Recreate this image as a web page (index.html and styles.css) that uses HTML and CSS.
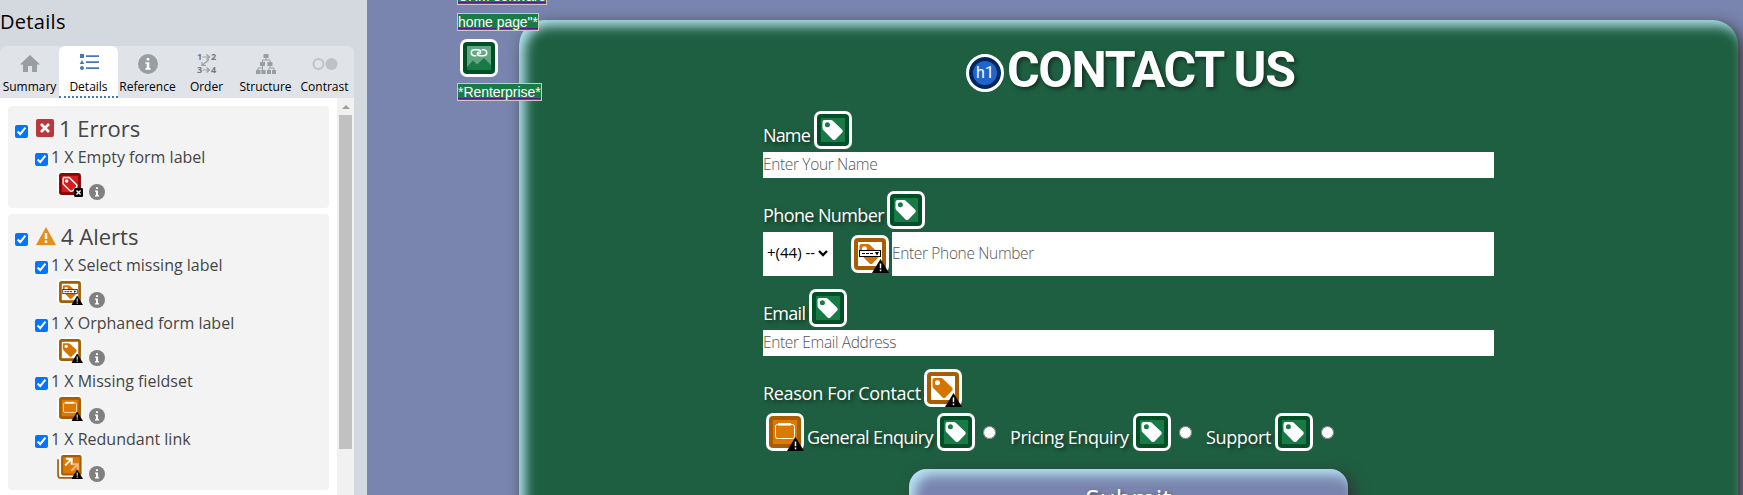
FILE: index.html
```html
<!DOCTYPE html>
<html lang="en">
<head>
<meta charset="utf-8">
<title>Contact Us</title>
<link rel="stylesheet" href="styles.css">
</head>
<body>
<svg class="defs" width="0" height="0">
  <symbol id="warn" viewBox="0 0 17 14"><path d="M8.5 0L17 14H0Z" fill="#000"/><path d="M8.5 4.5V9.3M8.5 10.5V12.3" stroke="#fff" stroke-width="1.5"/></symbol>
  <symbol id="tagshape" viewBox="0 0 38 38"><path fill-rule="evenodd" d="M10.5 9H17Q18 9 18.8 9.8L28.2 18.8Q29.5 20.2 28.2 21.5L21.5 28.4Q20 29.7 18.5 28.4L9.5 19.2Q8.5 18.3 8.5 17V11Q8.5 9 10.5 9ZM13.4 11.2A2.5 2.5 0 1 0 13.4 16.2A2.5 2.5 0 1 0 13.4 11.2Z"/></symbol>
  <symbol id="label" viewBox="0 0 38 38"><rect width="38" height="38" rx="7" fill="#fff"/><rect x="3" y="3" width="32" height="32" rx="4" fill="#004f27"/><rect x="7" y="7" width="24" height="24" fill="#187b47"/><use href="#tagshape" fill="#fff"/></symbol>
  <symbol id="orphan" viewBox="0 0 38 38"><rect width="38" height="38" rx="7" fill="#fff"/><rect x="3" y="3" width="32" height="32" rx="4" fill="#a85d00"/><rect x="7" y="7" width="24" height="24" fill="#fff"/><use href="#tagshape" fill="#d47500"/><use href="#warn" x="21" y="24" width="17" height="14"/></symbol>
  <symbol id="select" viewBox="0 0 38 38"><rect width="38" height="38" rx="7" fill="#fff"/><rect x="3" y="3" width="32" height="32" rx="4" fill="#a85d00"/><rect x="7" y="7" width="24" height="24" fill="#fff"/><use href="#tagshape" fill="#d47500"/><rect x="8.5" y="15.5" width="21" height="6" fill="#fff" stroke="#000"/><path d="M11 18.5H23" stroke="#000" stroke-width="1.2" stroke-dasharray="3 1"/><path d="M24 17H28L26 20.5Z"/><use href="#warn" x="21" y="24" width="17" height="14"/></symbol>
  <symbol id="fieldset" viewBox="0 0 38 38"><rect width="38" height="38" rx="7" fill="#fff"/><rect x="3" y="3" width="32" height="32" rx="4" fill="#a85d00"/><rect x="7" y="7" width="24" height="24" fill="#dc7a00"/><rect x="9.5" y="11.5" width="19" height="14" rx="2" fill="none" stroke="#fff"/><path d="M12 11.3H25" stroke="#fff" stroke-width="2.6"/><use href="#warn" x="21" y="24" width="17" height="14"/></symbol>
  <symbol id="redundant" viewBox="0 0 38 38"><rect x="0" y="4" width="34" height="34" rx="6" fill="#fff"/><path d="M1.5 9V32Q1.5 36.5 6 36.5H28" fill="none" stroke="#a85d00" stroke-width="2.5"/><rect x="4" y="0" width="34" height="34" rx="6" fill="#fff"/><rect x="6" y="3" width="30" height="30" rx="3" fill="#a85d00"/><rect x="9" y="6" width="24" height="24" fill="#dc7a00"/><path d="M12 18L20 10M13 8.5H21.5V17" fill="none" stroke="#fff" stroke-width="2.8"/><path d="M21 26L29 18M22 16.5H30.5V25" fill="none" stroke="#f3bd83" stroke-width="2.8"/><use href="#warn" x="21" y="24" width="17" height="14"/></symbol>
  <symbol id="emptylabel" viewBox="0 0 38 38"><rect width="38" height="38" rx="7" fill="#fff"/><rect x="3" y="3" width="32" height="32" rx="4" fill="#8c0505"/><rect x="7" y="7" width="24" height="24" fill="#d11f1f"/><path d="M10 9.5H18L29 20.5V23L22 29.5H19.5L9 19V10.5Z" fill="none" stroke="#fff" stroke-width="2"/><circle cx="14" cy="14.5" r="2.6" fill="#fff"/><rect x="25" y="25" width="13" height="13" rx="2"/><path d="M28.5 28.5L34.5 34.5M34.5 28.5L28.5 34.5" stroke="#fff" stroke-width="2"/></symbol>
  <symbol id="linkedimage" viewBox="0 0 38 38"><rect width="38" height="38" rx="7" fill="#fff"/><rect x="3" y="3" width="32" height="32" rx="4" fill="#004f27"/><rect x="7" y="7" width="24" height="24" fill="#60a680"/><path d="M7 28L13 21.5L17 25.5L24 19L31 26V31H7Z" fill="#187b47"/><path d="M16.5 16.8H14.5Q11.3 16.8 11.3 13.8T14.5 10.8H17.5Q20.5 10.8 20.5 13.2Q20.5 14.6 18.5 14.6M21.5 10.8H23.5Q26.7 10.8 26.7 13.8T23.5 16.8H20Q17.3 16.8 17.3 14.6Q17.3 13.2 19 13.2" fill="none" stroke="#fff" stroke-width="1.5"/></symbol>
  <symbol id="info" viewBox="0 0 20 20"><circle cx="10" cy="10" r="10" fill="currentColor"/><path d="M8.7 4H11.3V6.4H8.7ZM7.4 8.2H11.3V14H12.6V15.7H7.4V14H8.7V9.8H7.4Z" fill="#fff"/></symbol>
</svg>
<div class="page">
  <aside class="sidebar">
    <h2 class="title">Details</h2>
    <nav class="tabs">
      <a class="tab"><svg class="tab-icon" viewBox="0 0 20 20"><path d="M10 1L20 10.5H17V18H12V12H8V18H3V10.5H0Z" fill="#999ea1"/></svg>Summary</a>
      <a class="tab active"><svg class="tab-icon" viewBox="0 0 20 20"><path d="M1 0H5V4H1ZM3 6L5.3 10H.7ZM7 1.2H20V3H7ZM7 7.2H20V9H7ZM7 13.2H20V15H7Z" fill="#4678b8"/><circle cx="3" cy="14" r="2" fill="#4678b8"/></svg>Details</a>
      <a class="tab"><svg class="tab-icon muted"><use href="#info"/></svg>Reference</a>
      <a class="tab"><svg class="tab-icon" viewBox="0 0 20 20"><g class="order-digits"><text x="0" y="6">1</text><text x="14" y="6">2</text><text x="0" y="19">3</text><text x="14" y="19">4</text></g><path d="M5.5 3H12M9.5 .5L12.5 3L9.5 5.5M5.5 16H12M9.5 13.5L12.5 16L9.5 18.5M12 5.5L5 11.5M5 8V11.5H9" fill="none" stroke="#999ea1" stroke-width="1.2"/></svg>Order</a>
      <a class="tab"><svg class="tab-icon" viewBox="0 0 20 20"><path d="M7.5 0H12.5V4H7.5ZM4 8H9V12H4ZM11.5 8H16.5V12H11.5ZM0 16H4.5V20H0ZM5.3 16H9.7V20H5.3ZM11 16H15V20H11ZM16 16H20V20H16Z" fill="#999ea1"/><path d="M10 4V6H6.5V8M10 6H14V8M6.5 12V14H2V16M6.5 14V16M14 12V14H18V16M13 14V16" fill="none" stroke="#999ea1"/></svg>Structure</a>
      <a class="tab"><svg class="tab-icon wide" viewBox="0 0 26 20"><circle cx="6.5" cy="10" r="5" fill="none" stroke="#bfc2c5" stroke-width="2"/><circle cx="19.5" cy="10" r="6" fill="#bfc2c5"/></svg>Contrast</a>
    </nav>
    <div class="results">
      <div class="groups">
        <section class="group">
          <div class="group-head"><input class="check" type="checkbox" checked><svg class="group-icon" viewBox="0 0 18 18"><rect width="18" height="18" rx="2" fill="#b8383b"/><path d="M5 5L13 13M13 5L5 13" stroke="#fff" stroke-width="2.7"/></svg><h3 class="group-title">1 Errors</h3></div>
          <div class="item"><label class="item-head"><input class="check" type="checkbox" checked>1 X Empty form label</label><div class="item-icons"><svg class="mini"><use href="#emptylabel"/></svg><svg class="info"><use href="#info"/></svg></div></div>
        </section>
        <section class="group">
          <div class="group-head"><input class="check" type="checkbox" checked><svg class="group-icon alert" viewBox="0 0 20 18"><path d="M10 0L20 18H0Z" fill="#e68e1a"/><path d="M10 6V12M10 13.4V16" stroke="#fff" stroke-width="2.5"/></svg><h3 class="group-title">4 Alerts</h3></div>
          <div class="item"><label class="item-head"><input class="check" type="checkbox" checked>1 X Select missing label</label><div class="item-icons"><svg class="mini"><use href="#select"/></svg><svg class="info"><use href="#info"/></svg></div></div>
          <div class="item"><label class="item-head"><input class="check" type="checkbox" checked>1 X Orphaned form label</label><div class="item-icons"><svg class="mini"><use href="#orphan"/></svg><svg class="info"><use href="#info"/></svg></div></div>
          <div class="item"><label class="item-head"><input class="check" type="checkbox" checked>1 X Missing fieldset</label><div class="item-icons"><svg class="mini"><use href="#fieldset"/></svg><svg class="info"><use href="#info"/></svg></div></div>
          <div class="item"><label class="item-head"><input class="check" type="checkbox" checked>1 X Redundant link</label><div class="item-icons"><svg class="mini"><use href="#redundant"/></svg><svg class="info"><use href="#info"/></svg></div></div>
        </section>
      </div>
      <div class="scrollbar"><svg class="arrow" viewBox="0 0 8 4"><path d="M4 0L8 4H0Z" fill="#a0a0a0"/></svg><div class="thumb"></div></div>
    </div>
  </aside>
  <main class="site">
    <div class="alts">
      <span class="alt first">CRM software</span>
      <span class="alt second">home page"*</span>
      <svg class="mark image-mark"><use href="#linkedimage"/></svg>
      <span class="alt">*Renterprise*</span>
    </div>
    <div class="card">
      <div class="heading"><span class="h1-mark">h1</span><h1 class="heading-text">CONTACT US</h1></div>
      <form class="form">
        <div class="label-row"><span class="label name">Name</span><svg class="mark"><use href="#label"/></svg></div>
        <input class="field" placeholder="Enter Your Name">
        <div class="label-row"><span class="label phone">Phone Number</span><svg class="mark"><use href="#label"/></svg></div>
        <div class="phone-row">
          <div class="code">+(44) --<svg class="chevron" viewBox="0 0 10 7"><path d="M1 1L5 5L9 1" fill="none" stroke="#000" stroke-width="2.3"/></svg></div>
          <svg class="mark"><use href="#select"/></svg>
          <input class="field tall" placeholder="Enter Phone Number">
        </div>
        <div class="label-row"><span class="label email">Email</span><svg class="mark"><use href="#label"/></svg></div>
        <input class="field" placeholder="Enter Email Address">
        <div class="label-row"><span class="label reason">Reason For Contact</span><svg class="mark"><use href="#orphan"/></svg></div>
        <div class="options">
          <svg class="mark"><use href="#fieldset"/></svg>
          <span class="label general">General Enquiry</span><svg class="mark"><use href="#label"/></svg><input class="radio" type="radio">
          <span class="label pricing">Pricing Enquiry</span><svg class="mark"><use href="#label"/></svg><input class="radio" type="radio">
          <span class="label support">Support</span><svg class="mark"><use href="#label"/></svg><input class="radio" type="radio">
        </div>
        <button class="submit" type="button">Submit</button>
      </form>
    </div>
  </main>
</div>
</body>
</html>
```
FILE: styles.css
```css
* { box-sizing: border-box; }
body { margin: 0; overflow: hidden; font-family: "Open Sans", sans-serif; }
svg { display: block; flex: none; }
.defs { position: absolute; }
.page { display: flex; height: 495px; overflow: hidden; background: #7985ae; }

.sidebar { width: 367px; flex: none; display: flex; flex-direction: column; background: #d4d8df; }
.title { margin: 0; height: 46px; padding-top: 8px; font-size: 20px; line-height: 28px; font-weight: 400; letter-spacing: .3px; color: #000; }
.tabs { display: flex; width: 354px; height: 52px; background: #e0e3e8; border-radius: 6px 6px 0 0; }
.tab { width: 59px; height: 52px; display: flex; flex-direction: column; align-items: center; padding-top: 8px; gap: 5px; font-size: 12px; line-height: 16px; color: #000; white-space: nowrap; }
.tab.active { background: #fff; border-radius: 6px 6px 0 0; border-bottom: 2px dotted #4678b8; }
.tab-icon { width: 20px; height: 20px; overflow: visible; }
.tab-icon.wide { width: 26px; }
.muted { color: #999ea1; }
.order-digits { font-size: 9px; font-weight: 700; fill: #77797c; }

.results { display: flex; width: 354px; height: 397px; background: #fff; }
.groups { width: 337px; padding: 8px; display: flex; flex-direction: column; gap: 6px; }
.group { width: 321px; background: #f3f3f3; border-radius: 4px; padding: 0 0 5px 7px; color: #454545; }
.group-head { display: flex; align-items: flex-start; height: 39px; }
.check { width: 13px; height: 13px; margin: 0; accent-color: #0075ff; flex: none; }
.group-head .check { margin-top: 19px; }
.group-icon { width: 18px; height: 18px; margin: 13px 5px 0 8px; }
.group-icon.alert { width: 20px; margin-right: 5px; }
.group-title { margin: 7px 0 0; font-size: 22px; line-height: 30px; font-weight: 400; }
.item { height: 58px; padding-left: 20px; }
.item-head { display: flex; gap: 3px; height: 24px; font-size: 16px; line-height: 24px; white-space: nowrap; }
.item-head .check { margin-top: 8px; }
.item-icons { display: flex; gap: 6px; padding: 2px 0 0 22px; }
.mini { width: 26px; height: 26px; }
.info { width: 16px; height: 16px; margin-top: 13px; color: #808080; }

.scrollbar { width: 17px; background: #f1f1f1; display: flex; flex-direction: column; align-items: center; padding-top: 7px; gap: 6px; }
.arrow { width: 8px; height: 4px; }
.thumb { width: 13px; height: 334px; background: #c1c1c1; }

.site { display: flex; flex: 1; }
.alts { width: 152px; flex: none; padding-left: 90px; display: flex; flex-direction: column; align-items: flex-start; z-index: 1; }
.alt { height: 18px; border: 1px solid #c9c9c0; background: #187b47; color: #fff; font: 14px/17px "Liberation Sans", Arial, sans-serif; letter-spacing: -.05px; text-decoration: underline #551a8b; text-underline-offset: 1px; white-space: nowrap; }
.first { margin-top: -13px; }
.second { margin-top: 8px; }
.mark { width: 38px; height: 38px; }
.image-mark { margin: 8px 0 6px 3px; }

.card { width: 1219px; height: 560px; flex: none; margin-top: 20px; padding: 34px 244px 0; border-radius: 25px; background: #1f5f41; box-shadow: inset 6px 6px 12px #b5e2f0, 5px 5px 15px #333; }
.heading { display: flex; height: 57px; padding-left: 203px; gap: 3px; }
.h1-mark { width: 38px; height: 38px; border-radius: 50%; border: 3px solid #fff; background: #1e66cd; box-shadow: inset 0 0 0 4px #00265c; color: #fff; font: 16px/32px Roboto, sans-serif; text-align: center; }
.heading-text { margin: -13px 0 0; font: 700 50px/58px Roboto, sans-serif; color: #fff; letter-spacing: -1.35px; text-shadow: 2px 2px 4px #0008; white-space: nowrap; }
.form { width: 731px; display: flex; flex-direction: column; }
.label-row { display: flex; height: 41px; }
.field + .label-row, .phone-row + .label-row { margin-top: 13px; }
.label { padding-top: 11px; font-size: 18px; line-height: 26px; color: #fff; text-shadow: 2px 2px 4px #0009; white-space: nowrap; flex: none; }
.name { width: 51px; letter-spacing: -.85px; }
.phone { width: 124px; letter-spacing: -.6px; }
.email { width: 46px; letter-spacing: -.7px; }
.reason { width: 161px; letter-spacing: -.3px; }
.field { width: 100%; height: 26px; border: 0; border-radius: 0; padding: 0 0 3px; background: #fff; font: 300 15.5px "Open Sans", sans-serif; letter-spacing: -.35px; outline: 0; }
.field::placeholder { color: #555; }
.phone-row { display: flex; height: 44px; }
.code { width: 70px; height: 44px; margin-right: 18px; padding: 8px 4px 0; display: flex; gap: 3px; background: #fff; font-size: 15px; line-height: 24px; white-space: nowrap; }
.chevron { width: 10px; height: 7px; margin-top: 10px; }
.phone-row .mark { margin: 3px 3px 0 0; }
.field.tall { flex: 1; width: auto; height: 44px; }
.options { display: flex; height: 59px; padding: 3px 0 0 3px; }
.general { width: 130px; margin-left: 3px; letter-spacing: -.6px; }
.pricing { width: 123px; letter-spacing: -.45px; }
.support { width: 69px; letter-spacing: -.35px; }
.radio { width: 13px; height: 13px; margin: 13px 14px 0 8px; flex: none; }
.submit { width: 439px; height: 70px; align-self: center; border: 0; border-radius: 18px; background: #7985ae; box-shadow: inset 6px 6px 12px #b9e4f5, 5px 5px 15px #333; color: #fff; font: 26px/36px "Open Sans", sans-serif; padding: 0 0 13px; text-shadow: 2px 2px 4px #0008; }
```
